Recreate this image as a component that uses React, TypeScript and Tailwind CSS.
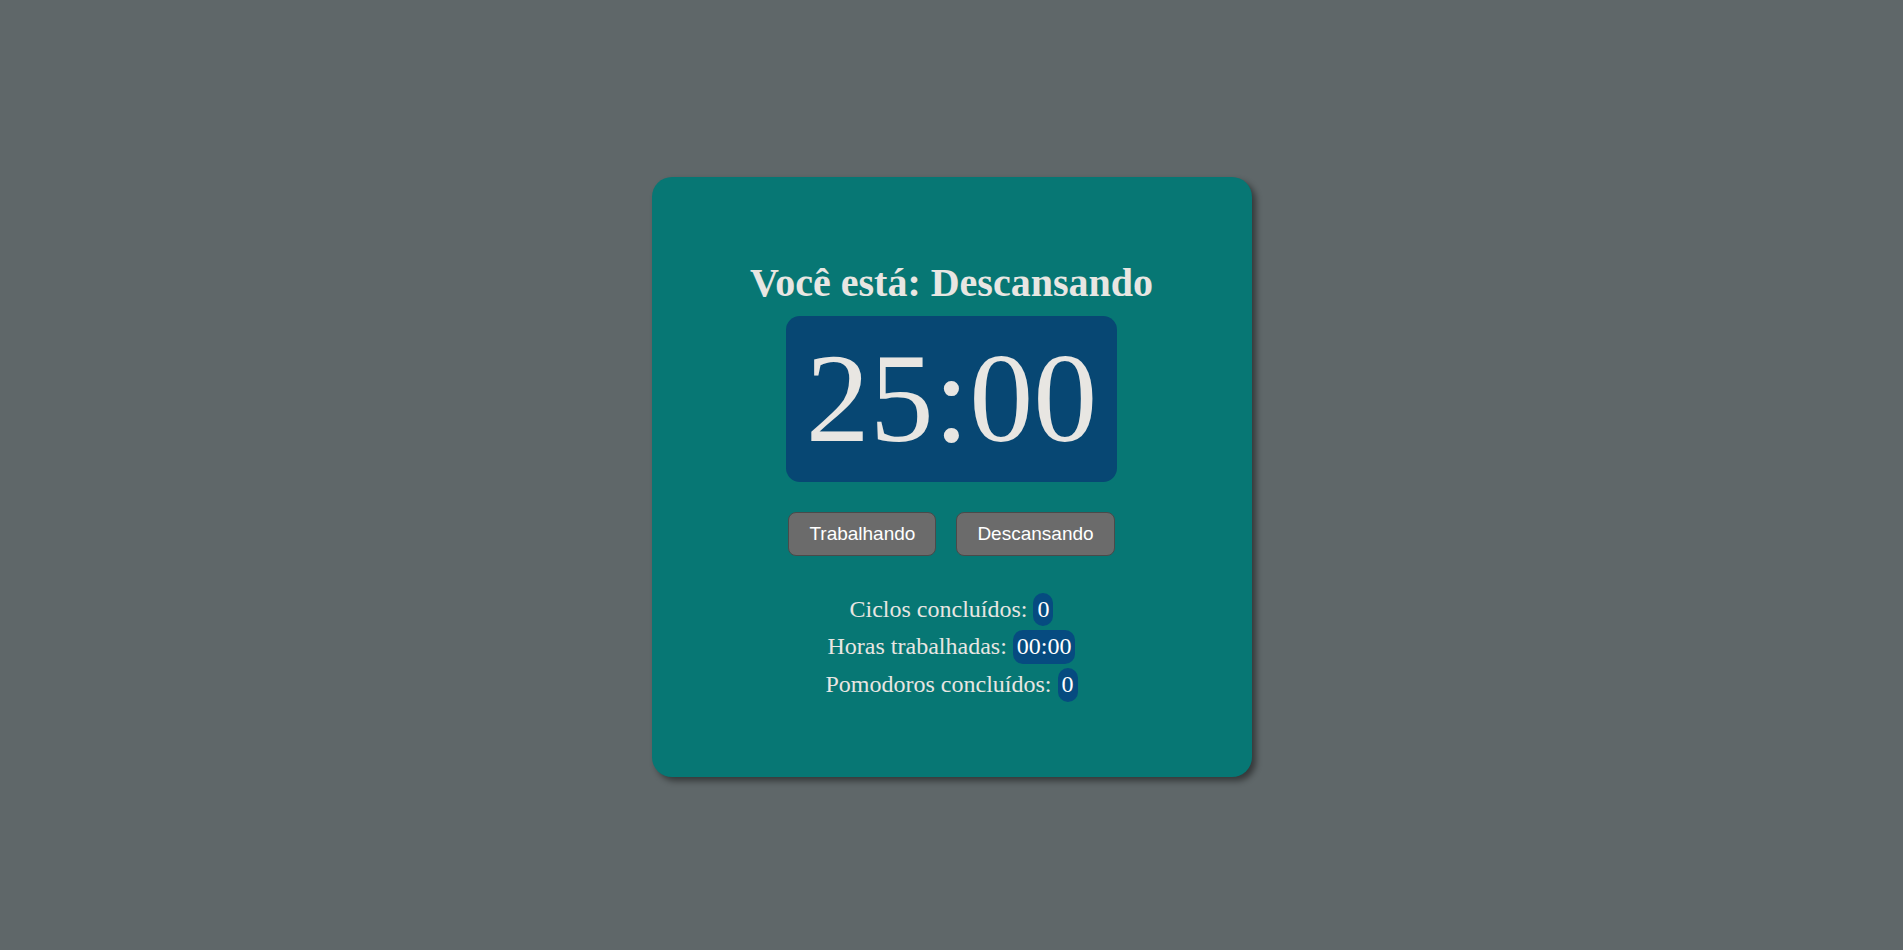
const stats = [
  { label: "Ciclos concluídos:", value: "0" },
  { label: "Horas trabalhadas:", value: "00:00" },
  { label: "Pomodoros concluídos:", value: "0" },
];

export default function App() {
  return (
    <div className="flex min-h-screen w-full items-center justify-center bg-[#5f6769] font-['Liberation_Serif',serif]">
      <div className="mt-[4px] flex h-[600px] w-[600px] flex-col items-center justify-center rounded-[20px] bg-[#077774] pt-[8px] text-[#e8e6e2] shadow-[4px_4px_6px_rgba(0,0,0,0.45)]">
        <h1 className="mb-[10px] text-[40px] font-bold leading-[1.15]">Você está: Descansando</h1>

        <div className="rounded-[14px] bg-[#074773] px-5 py-3 text-[128px] leading-[1.107]">25:00</div>

        <div className="mt-[30px] flex gap-5">
          {["Trabalhando", "Descansando"].map((label) => (
            <button
              key={label}
              className="rounded-lg border border-[#4a4a4a] bg-[#6b6b6b] px-5 py-2.5 font-['Liberation_Sans',Arial,sans-serif] text-[19px] leading-[1.15] text-white"
            >
              {label}
            </button>
          ))}
        </div>

        <div className="mt-[37px] flex flex-col items-center gap-[4px] text-[24px] leading-[1.15]">
          {stats.map((s) => (
            <div key={s.label} className="flex items-center">
              <span>{s.label}</span>
              <span className="ml-[6px] rounded-[10px] bg-[#064b80] px-[4px] py-[3px] text-white">{s.value}</span>
            </div>
          ))}
        </div>
      </div>
    </div>
  );
}
